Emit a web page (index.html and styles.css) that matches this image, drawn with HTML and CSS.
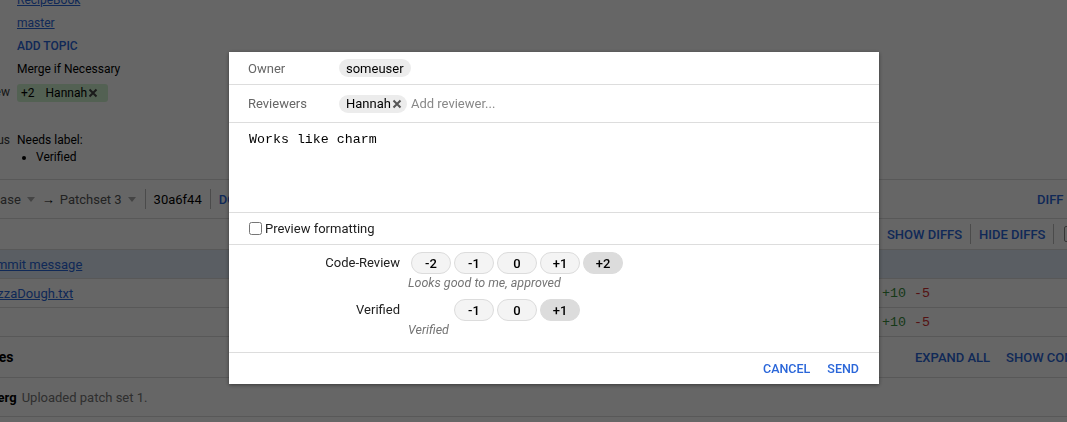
FILE: index.html
```html
<!DOCTYPE html>
<html>
<head>
<meta charset="utf-8">
<link rel="stylesheet" href="styles.css">
</head>
<body>
<div class="page">
  <section class="meta">
    <div class="meta-row"><span class="meta-label">Repo</span><a class="link">RecipeBook</a></div>
    <div class="meta-row"><span class="meta-label"></span><a class="link">master</a></div>
    <div class="meta-row"><span class="meta-label"></span><span class="action">ADD TOPIC</span></div>
    <div class="meta-row"><span class="meta-label"></span><span>Merge if Necessary</span></div>
    <div class="meta-row"><span class="meta-label shown">Code-Review</span><span class="vote-chip"><span class="vote-val">+2</span><span>Hannah</span><svg class="x-icon" viewBox="0 0 10 10"><path d="M1.5 1.5 8.5 8.5M8.5 1.5 1.5 8.5"/></svg></span></div>
    <div class="meta-row status-row"><span class="meta-label shown">Status</span>
      <div class="status-val"><div>Needs label:</div><ul class="needs"><li>Verified</li></ul></div>
    </div>
  </section>

  <section class="bar patch-bar">
    <div class="patch-left">
      <span class="base">Base</span><span class="caret"></span>
      <span class="arrow">→</span>
      <span class="ps">Patchset 3</span><span class="caret"></span>
      <span class="sep"></span>
      <span class="commit">30a6f44</span>
      <span class="sep"></span>
      <span class="action big">DOWNLOAD</span>
    </div>
    <div class="diff-group"><span class="action big">DIFF</span></div>
  </section>

  <section class="bar controls-bar">
    <div class="controls">
      <span class="action big">SHOW DIFFS</span><span class="sep"></span><span class="action big">HIDE DIFFS</span><span class="sep"></span><span class="box"></span>
    </div>
  </section>

  <section class="bar file-row highlighted">
    <a class="link file commit-msg">Commit message</a>
  </section>
  <section class="bar file-row">
    <a class="link file pizza">PizzaDough.txt</a>
    <span class="stats"><span class="added">+10</span> <span class="removed">-5</span></span>
  </section>
  <section class="bar file-row">
    <span class="stats"><span class="added">+10</span> <span class="removed">-5</span></span>
  </section>

  <section class="bar msg-head">
    <span class="heading">Messages</span>
    <span class="msg-actions"><span class="action big">EXPAND ALL</span><span class="action big">SHOW COMMENTS ONLY</span></span>
  </section>
  <section class="bar msg-row">
    <span class="author">Hannah Fernberg</span><span class="msg-text">Uploaded patch set 1.</span>
  </section>
</div>

<div class="backdrop"></div>

<div class="dialog">
  <div class="d-row owner">
    <span class="d-label">Owner</span>
    <span class="chip">someuser</span>
  </div>
  <div class="d-row reviewers">
    <span class="d-label">Reviewers</span>
    <span class="chip">Hannah<svg class="x-icon dark" viewBox="0 0 10 10"><path d="M1.5 1.5 8.5 8.5M8.5 1.5 1.5 8.5"/></svg></span>
    <span class="placeholder">Add reviewer...</span>
  </div>
  <div class="message">Works like charm</div>
  <div class="d-row preview">
    <input type="checkbox" class="cb"><span>Preview formatting</span>
  </div>
  <div class="labels">
    <div class="label-row">
      <span class="label-name">Code-Review</span>
      <div class="label-value">
        <div class="votes">
          <span class="vote">-2</span><span class="vote">-1</span><span class="vote">0</span><span class="vote">+1</span><span class="vote sel">+2</span>
        </div>
        <div class="desc">Looks good to me, approved</div>
      </div>
    </div>
    <div class="label-row">
      <span class="label-name">Verified</span>
      <div class="label-value">
        <div class="votes">
          <span class="vote-gap"></span><span class="vote">-1</span><span class="vote">0</span><span class="vote sel">+1</span>
        </div>
        <div class="desc">Verified</div>
      </div>
    </div>
  </div>
  <div class="footer">
    <span class="btn">CANCEL</span>
    <span class="btn">SEND</span>
  </div>
</div>
</body>
</html>
```

FILE: styles.css
```css
html, body {
  margin: 0;
  padding: 0;
  overflow: hidden;
  background: #fff;
}
body {
  font-family: Roboto, "Liberation Sans", sans-serif;
  font-size: 13px;
  color: #212121;
  width: 1067px;
  height: 422px;
}
.page {
  width: 1067px;
  overflow: hidden;
}
.link {
  color: #2a66d9;
  text-decoration: underline;
}
.action {
  color: #2a66d9;
  font-weight: 500;
  text-transform: uppercase;
}

/* meta */
.meta {
  margin-top: -11px;
  font-size: 12px;
  color: #000;
  height: 190px;
}
.meta-row {
  display: grid;
  grid-template-columns: 100px 1fr;
  column-gap: 7px;
  margin-left: -90px;
  line-height: 23px;
  align-items: center;
}
.meta-label {
  text-align: right;
  visibility: hidden;
}
.meta-label.shown {
  visibility: visible;
  color: #3a3a3a;
}
.vote-chip {
  justify-self: start;
  display: inline-flex;
  align-items: center;
  height: 18px;
  line-height: 18px;
  padding: 0 10px 0 4px;
  background: #d0f2d0;
  border-radius: 3px;
  color: #000;
}
.vote-val {
  margin-right: 11px;
}
.x-icon {
  width: 10px;
  height: 10px;
  margin-left: 1px;
  stroke: #444;
  stroke-width: 2;
  fill: none;
}
.status-row {
  margin-top: 28px;
  align-items: start;
  line-height: 17px;
}
.needs {
  margin: 0;
  padding-left: 19px;
}

/* bars */
.bar {
  display: flex;
  align-items: center;
  border-bottom: 1px solid #ddd;
  box-sizing: border-box;
}
.patch-bar {
  height: 40px;
  border-top: 1px solid #ddd;
  justify-content: space-between;
}
.patch-left {
  display: flex;
  align-items: center;
}
.base {
  margin-left: -8px;
  color: #555;
}
.caret {
  flex: none;
  width: 0;
  height: 0;
  border-left: 4px solid transparent;
  border-right: 4px solid transparent;
  border-top: 5px solid #aaa;
  margin: 0 1px 0 6px;
}
.arrow {
  color: #000;
  margin: 0 5px 0 6px;
}
.ps {
  color: #555;
}
.sep {
  flex: none;
  width: 1px;
  height: 20px;
  background: #bbb;
  margin: 0 8px;
}
.commit {
  color: #000;
}
.big {
  font-size: 13px;
}
.diff-group {
  width: 30px;
  flex: none;
  white-space: nowrap;
}
.controls-bar {
  height: 31px;
  justify-content: flex-end;
}
.controls {
  width: 180px;
  flex: none;
  display: flex;
  align-items: center;
  white-space: nowrap;
}
.controls .sep {
  margin: 0 8px;
}
.box {
  width: 14px;
  height: 14px;
  border: 1px solid #888;
  border-radius: 2px;
  margin-left: 2px;
  flex: none;
}
.file-row {
  height: 29px;
}
.highlighted {
  background: #e0ebf7;
}
.commit-msg {
  margin-left: -20px;
}
.pizza {
  margin-left: -14px;
}
.stats {
  margin-left: auto;
  width: 185px;
  flex: none;
  font-family: "Liberation Mono", "DejaVu Sans Mono", monospace;
  font-size: 13.3px;
}
.added {
  color: #388e3c;
}
.removed {
  color: #d32f2f;
}
.msg-head {
  height: 41px;
}
.heading {
  font-weight: 700;
  font-size: 14px;
  margin-left: -51px;
  color: #000;
}
.msg-actions {
  margin-left: auto;
  width: 152px;
  flex: none;
  white-space: nowrap;
  display: flex;
  gap: 16px;
}
.msg-row {
  height: 39px;
}
.author {
  font-weight: 700;
  margin-left: -84px;
  color: #000;
}
.msg-text {
  margin-left: 5px;
  color: #757575;
}

/* overlay */
.backdrop {
  position: fixed;
  inset: 0;
  background: rgba(0, 0, 0, 0.6);
}
.dialog {
  position: fixed;
  left: 229px;
  top: 52px;
  width: 650px;
  background: #fff;
  box-shadow: 0 1px 4px rgba(0, 0, 0, 0.45);
  font-size: 13px;
  color: #212121;
}
.d-row {
  display: flex;
  align-items: center;
  padding: 0 20px 0 19px;
  border-bottom: 1px solid #ddd;
}
.owner {
  height: 32px;
}
.reviewers {
  height: 37px;
}
.d-label {
  width: 91px;
  color: #666;
  flex: none;
}
.chip {
  display: inline-flex;
  align-items: center;
  height: 18px;
  padding: 0 7px;
  border-radius: 9px;
  background: #ececec;
  color: #000;
}
.x-icon.dark {
  margin-left: 1px;
  stroke: #555;
}
.reviewers .chip {
  padding-right: 5px;
}
.placeholder {
  margin-left: 4px;
  color: #888;
}
.message {
  height: 90px;
  box-sizing: border-box;
  padding: 9px 20px;
  border-bottom: 1px solid #ddd;
  font-family: "Liberation Mono", "DejaVu Sans Mono", monospace;
  font-size: 13.3px;
  color: #000;
}
.preview {
  height: 31px;
  padding-left: 20px;
}
.cb {
  width: 13px;
  height: 13px;
  margin: 0 3px 0 0;
}
.labels {
  height: 108px;
  box-sizing: border-box;
  padding-top: 7px;
  border-bottom: 1px solid #ddd;
}
.label-row {
  display: flex;
  align-items: flex-start;
  margin-bottom: 8px;
}
.label-name {
  width: 161px;
  margin-left: 10px;
  text-align: right;
  line-height: 22px;
  flex: none;
}
.label-value {
  margin-left: 8px;
}
.votes {
  display: flex;
}
.vote {
  width: 40px;
  height: 22px;
  box-sizing: border-box;
  margin-left: 3px;
  border: 1px solid #dcdcdc;
  border-radius: 11px;
  background: #f4f4f4;
  display: flex;
  align-items: center;
  justify-content: center;
  font-weight: 500;
  color: #000;
}
.vote.sel {
  background: #dcdcdc;
}
.vote-gap {
  width: 40px;
  margin-left: 3px;
}
.desc {
  font-style: italic;
  font-size: 12.5px;
  color: #757575;
  line-height: 16px;
  margin-top: 1px;
}
.footer {
  height: 31px;
  display: flex;
  align-items: center;
  justify-content: flex-end;
  gap: 17px;
  padding-right: 20px;
}
.btn {
  color: #2a66d9;
  font-weight: 500;
  font-size: 12.5px;
}
```
